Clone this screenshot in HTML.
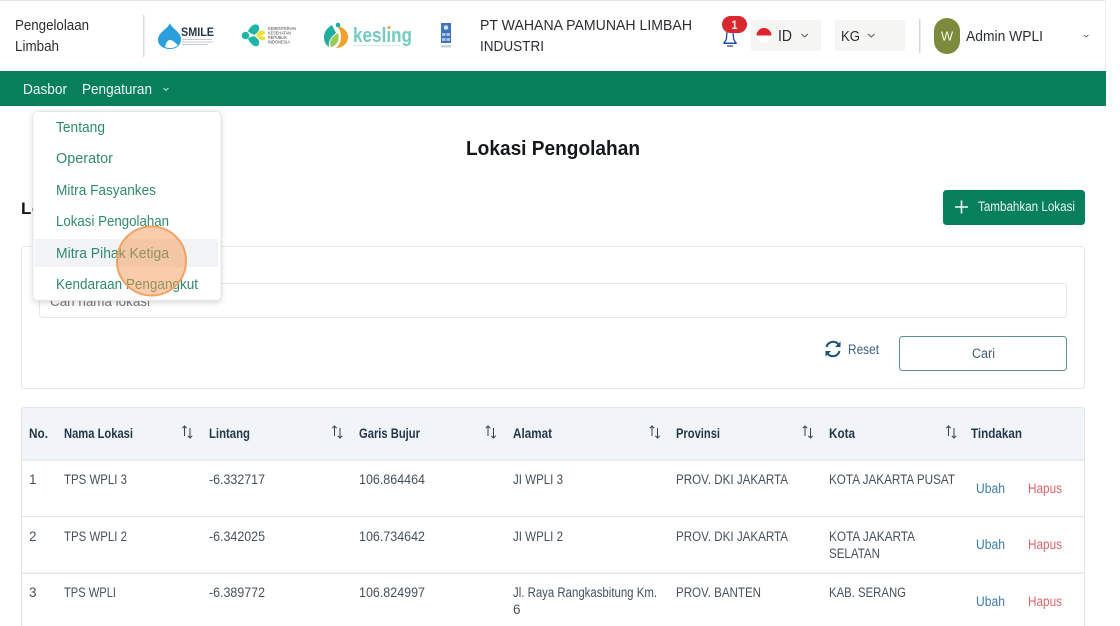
<!DOCTYPE html>
<html lang="id"><head><meta charset="utf-8"><title>Lokasi Pengolahan</title>
<style>
html,body{margin:0;padding:0;width:1120px;height:626px;overflow:hidden;background:#fff}
svg{display:block;filter:blur(.3px)}
text{font-family:"Liberation Sans",sans-serif;font-size:13px;fill:#37474f}
.h{font-size:15px;fill:#2b2f33}
.n{font-size:15px;fill:#eef7f3}
.m{font-size:15px;fill:#2f8a6d}
.th{font-size:13.5px;font-weight:bold;fill:#24384a}
.td{font-size:13.5px;fill:#45525c}
.u{font-size:13.5px;fill:#3d7cb0}
.x{font-size:13.5px;fill:#d9666c}
</style></head><body>
<svg width="1120" height="626" viewBox="0 0 1120 626" xmlns="http://www.w3.org/2000/svg">
<defs><filter id="s" x="-10%" y="-10%" width="120%" height="120%"><feDropShadow dx="0" dy="2" stdDeviation="3" flood-color="#000" flood-opacity=".14"/></filter></defs>
<rect width="1120" height="626" fill="#fff"/>
<rect x="0" y="0" width="1106" height="1" fill="#e4e4e4"/>
<rect x="1105" y="0" width="1" height="71" fill="#efefef"/>
<text class="h" x="15" y="30" textLength="74" lengthAdjust="spacingAndGlyphs">Pengelolaan</text>
<text class="h" x="15" y="51" textLength="44" lengthAdjust="spacingAndGlyphs">Limbah</text>
<rect x="143" y="15" width="1.500" height="42" fill="#dcdcdc"/>
<path d="M170 23C168 29 158 32 158 40C158 45 163 49 170 49C177 49 181 45 181 39C181 32 172 29 170 23Z" fill="#2a9fdc"/>
<path d="M165 47C166 42 168 40 170 40C173 40 175 43 178 45C175 48 170 49 165 47Z" fill="#fff"/>
<text x="181" y="36" textLength="33" lengthAdjust="spacingAndGlyphs" style="font-size:11.500px;font-weight:bold;fill:#24384a">SMILE</text>
<rect x="182" y="39" width="30" height="1" fill="#c5ccd0"/><rect x="182" y="41.500" width="31" height="1" fill="#c5ccd0"/><rect x="182" y="44" width="26" height="1" fill="#c5ccd0"/>
<path d="M248 31C252 23 258 23 259 27C260 31 257 33 254 35C251 33 249 33 248 31Z" fill="#1fb5a6"/>
<path d="M248 39C252 47 258 48 259 44C260 40 257 38 254 36C251 37 249 37 248 39Z" fill="#1fb5a6"/>
<circle cx="245.500" cy="35.500" r="3.800" fill="#1fb5a6"/>
<path d="M256 35C259 30 263 29 265 32C266 34 263 35 260 35.500C263 36 266 37 265 39C263 42 259 40 256 35Z" fill="#f2e23c"/>
<text x="268" y="30" textLength="28" lengthAdjust="spacingAndGlyphs" style="font-size:4.500px;fill:#444">KEMENTERIAN</text>
<text x="268" y="34.500" textLength="23" lengthAdjust="spacingAndGlyphs" style="font-size:4.500px;fill:#444">KESEHATAN</text>
<text x="268" y="39" textLength="19" lengthAdjust="spacingAndGlyphs" style="font-size:4.500px;fill:#444">REPUBLIK</text>
<text x="268" y="43.500" textLength="22" lengthAdjust="spacingAndGlyphs" style="font-size:4.500px;fill:#444">INDONESIA</text>
<path d="M336 25C344 27 348 32 348 37C348 44 342 48 336 48C338 46 341 43 341 37C341 32 339 28 336 25Z" fill="#f5a02d"/>
<path d="M332 25C327 28 324 32 324 37C324 42 326 45 329 47C328 41 331 37 336 33C335 30 333 28 332 25Z" fill="#1fae9e"/>
<path d="M331 47C328 41 333 36 338 33C340 39 338 45 331 47Z" fill="#9ccb55"/>
<circle cx="338" cy="25" r="2.300" fill="#1fae9e"/>
<text x="353" y="42" textLength="59" lengthAdjust="spacingAndGlyphs" style="font-size:20px;fill:#74cbc2;font-weight:bold">kesling</text>
<rect x="354" y="45" width="46" height="1" fill="#d5ebe8"/>
<circle cx="389" cy="27.500" r="1.500" fill="#f5a02d"/>
<rect x="441" y="23" width="10" height="20" fill="#3f73b8"/>
<circle cx="446" cy="27.500" r="2.300" fill="#cfe0f2"/>
<rect x="442" y="33" width="3.500" height="3" fill="#a8c4e6"/><rect x="446.500" y="33" width="3.500" height="3" fill="#a8c4e6"/><rect x="442" y="38" width="3.500" height="3" fill="#a8c4e6"/><rect x="446.500" y="38" width="3.500" height="3" fill="#a8c4e6"/>
<rect x="441" y="45" width="10" height="2.500" fill="#c8d3df"/>
<text class="h" x="480" y="30" textLength="212" lengthAdjust="spacingAndGlyphs">PT WAHANA PAMUNAH LIMBAH</text>
<text class="h" x="480" y="51" textLength="64" lengthAdjust="spacingAndGlyphs">INDUSTRI</text>
<path d="M727 31L726.500 38C726.300 40 725.200 41.500 723.800 43.200H736.200C734.800 41.500 733.700 40 733.500 38L733 31" fill="none" stroke="#2146a8" stroke-width="1.300" stroke-linejoin="round"/>
<path d="M723.800 43.200H736.200" stroke="#2146a8" stroke-width="1.300"/>
<path d="M727.500 46H732.500" stroke="#2146a8" stroke-width="1.300" stroke-linecap="round"/>
<rect x="722" y="16" width="25" height="17" rx="8.500" fill="#d8282f"/>
<text x="734.500" y="29" text-anchor="middle" style="font-size:11.500px;font-weight:bold;fill:#f6e6e6">1</text>
<rect x="751" y="20" width="70" height="31" fill="#f5f5f3"/>
<circle cx="764" cy="35.500" r="7.500" fill="#fff"/>
<path d="M756.500 35.500A7.500 7.500 0 0 1 771.500 35.500Z" fill="#e0232d"/>
<text class="h" x="778" y="41" textLength="14" lengthAdjust="spacingAndGlyphs" style="font-size:15.500px">ID</text>
<path d="M801.500 34L804.700 37L808 34" fill="none" stroke="#555" stroke-width="1"/>
<rect x="835" y="20" width="70" height="31" fill="#f5f5f3"/>
<text class="h" x="841" y="41" textLength="19" lengthAdjust="spacingAndGlyphs" style="font-size:15px">KG</text>
<path d="M868 34L871.300 37L874.500 34" fill="none" stroke="#555" stroke-width="1"/>
<rect x="919" y="19" width="1.500" height="34" fill="#d6d6d6"/>
<rect x="934" y="18" width="26" height="36" rx="13" fill="#7b8a3b"/>
<text x="947" y="40.500" text-anchor="middle" style="font-size:13px;fill:#f3f5ea">W</text>
<text class="h" x="966" y="41" textLength="77" lengthAdjust="spacingAndGlyphs">Admin WPLI</text>
<path d="M1084 35L1086.200 37L1088.400 35" fill="none" stroke="#666" stroke-width="1"/>
<rect x="0" y="71" width="1106" height="35" fill="#087f5b"/>
<text class="n" x="23" y="94" textLength="44" lengthAdjust="spacingAndGlyphs">Dasbor</text>
<text class="n" x="82" y="94" textLength="70" lengthAdjust="spacingAndGlyphs">Pengaturan</text>
<path d="M163.500 88L166 90.300L168.500 88" fill="none" stroke="#bfe0d4" stroke-width="1"/>
<text x="466" y="155" textLength="174" lengthAdjust="spacingAndGlyphs" style="font-size:20px;font-weight:bold;fill:#15181b">Lokasi Pengolahan</text>
<text x="21" y="214" style="font-size:17px;font-weight:bold;fill:#15181b">Lo</text>
<rect x="943" y="190" width="142" height="35" rx="3.500" fill="#087f5b"/>
<path d="M961.500 200.500V213.500M955 207H968" stroke="#f2f9f6" stroke-width="1.600"/>
<text x="978" y="211" textLength="97" lengthAdjust="spacingAndGlyphs" style="font-size:13.500px;fill:#e8f4ef">Tambahkan Lokasi</text>
<rect x="21.500" y="246.500" width="1063" height="142" rx="3" fill="#fff" stroke="#e6e6e6"/>
<rect x="39.500" y="283.500" width="1027" height="34" rx="3" fill="#fff" stroke="#e6e6e6"/>
<text x="50" y="306" textLength="100" lengthAdjust="spacingAndGlyphs" style="font-size:14px;fill:#777">Cari nama lokasi</text>
<g fill="none" stroke="#14527f" stroke-width="2">
<path d="M826.500 347A6.800 6.800 0 0 1 838.500 344.500"/>
<path d="M839.500 351A6.800 6.800 0 0 1 827.500 353.500"/>
</g>
<path d="M840.500 341.500V347H835Z M825.500 356.500V351H831Z" fill="#14527f"/>
<text x="848" y="354" textLength="31" lengthAdjust="spacingAndGlyphs" style="font-size:13.500px;fill:#3d5f85">Reset</text>
<rect x="899.500" y="336.500" width="167" height="34" rx="3" fill="#fff" stroke="#5f8f90"/>
<text x="972" y="358" textLength="23" lengthAdjust="spacingAndGlyphs" style="font-size:13.500px;fill:#3d5f75">Cari</text>
<rect x="21.500" y="407.500" width="1063" height="230" rx="3" fill="#fff" stroke="#e2e4e6"/>
<path d="M22 460V411Q22 408 25 408H1081Q1084 408 1084 411V460Z" fill="#f1f5f9"/>
<rect x="22" y="459.500" width="1062" height="1" fill="#d9dde1"/>
<rect x="22" y="516" width="1062" height="1" fill="#dfe1e3"/>
<rect x="22" y="572.500" width="1062" height="1.500" fill="#e4e6e8"/>
<text class="th" x="29" y="438" textLength="19" lengthAdjust="spacingAndGlyphs">No.</text>
<text class="th" x="64" y="438" textLength="69" lengthAdjust="spacingAndGlyphs">Nama Lokasi</text>
<text class="th" x="209" y="438" textLength="41" lengthAdjust="spacingAndGlyphs">Lintang</text>
<text class="th" x="359" y="438" textLength="61" lengthAdjust="spacingAndGlyphs">Garis Bujur</text>
<text class="th" x="513" y="438" textLength="39" lengthAdjust="spacingAndGlyphs">Alamat</text>
<text class="th" x="676" y="438" textLength="44" lengthAdjust="spacingAndGlyphs">Provinsi</text>
<text class="th" x="829" y="438" textLength="26" lengthAdjust="spacingAndGlyphs">Kota</text>
<text class="th" x="971" y="438" textLength="51" lengthAdjust="spacingAndGlyphs">Tindakan</text>
<g fill="none" stroke="#33424f" stroke-width="1">
<path d="M184.500 436V426M182.300 428.200L184.500 426L186.700 428.200M190 428V438M187.800 435.800L190 438L192.200 435.800"/>
<path d="M334.500 436V426M332.300 428.200L334.500 426L336.700 428.200M340 428V438M337.800 435.800L340 438L342.200 435.800"/>
<path d="M488 436V426M485.800 428.200L488 426L490.200 428.200M493.500 428V438M491.300 435.800L493.500 438L495.700 435.800"/>
<path d="M652 436V426M649.800 428.200L652 426L654.200 428.200M657.500 428V438M655.300 435.800L657.500 438L659.700 435.800"/>
<path d="M805 436V426M802.800 428.200L805 426L807.200 428.200M810.500 428V438M808.300 435.800L810.500 438L812.700 435.800"/>
<path d="M948.500 436V426M946.300 428.200L948.500 426L950.700 428.200M954 428V438M951.800 435.800L954 438L956.200 435.800"/>
</g>
<text class="td" x="29" y="484">1</text>
<text class="td" x="64" y="484" textLength="63" lengthAdjust="spacingAndGlyphs">TPS WPLI 3</text>
<text class="td" x="209" y="484" textLength="56" lengthAdjust="spacingAndGlyphs">-6.332717</text>
<text class="td" x="359" y="484" textLength="66" lengthAdjust="spacingAndGlyphs">106.864464</text>
<text class="td" x="513" y="484" textLength="50" lengthAdjust="spacingAndGlyphs">JI WPLI 3</text>
<text class="td" x="676" y="484" textLength="112" lengthAdjust="spacingAndGlyphs">PROV. DKI JAKARTA</text>
<text class="td" x="829" y="484" textLength="126" lengthAdjust="spacingAndGlyphs">KOTA JAKARTA PUSAT</text>
<text class="u" x="976" y="493" textLength="29" lengthAdjust="spacingAndGlyphs">Ubah</text>
<text class="x" x="1028" y="493" textLength="34" lengthAdjust="spacingAndGlyphs">Hapus</text>
<text class="td" x="29" y="541">2</text>
<text class="td" x="64" y="541" textLength="63" lengthAdjust="spacingAndGlyphs">TPS WPLI 2</text>
<text class="td" x="209" y="541" textLength="56" lengthAdjust="spacingAndGlyphs">-6.342025</text>
<text class="td" x="359" y="541" textLength="66" lengthAdjust="spacingAndGlyphs">106.734642</text>
<text class="td" x="513" y="541" textLength="50" lengthAdjust="spacingAndGlyphs">JI WPLI 2</text>
<text class="td" x="676" y="541" textLength="112" lengthAdjust="spacingAndGlyphs">PROV. DKI JAKARTA</text>
<text class="td" x="829" y="541" textLength="86" lengthAdjust="spacingAndGlyphs">KOTA JAKARTA</text>
<text class="td" x="829" y="558" textLength="51" lengthAdjust="spacingAndGlyphs">SELATAN</text>
<text class="u" x="976" y="549" textLength="29" lengthAdjust="spacingAndGlyphs">Ubah</text>
<text class="x" x="1028" y="549" textLength="34" lengthAdjust="spacingAndGlyphs">Hapus</text>
<text class="td" x="29" y="597">3</text>
<text class="td" x="64" y="597" textLength="52" lengthAdjust="spacingAndGlyphs">TPS WPLI</text>
<text class="td" x="209" y="597" textLength="56" lengthAdjust="spacingAndGlyphs">-6.389772</text>
<text class="td" x="359" y="597" textLength="66" lengthAdjust="spacingAndGlyphs">106.824997</text>
<text class="td" x="513" y="597" textLength="144" lengthAdjust="spacingAndGlyphs">Jl. Raya Rangkasbitung Km.</text>
<text class="td" x="513" y="614">6</text>
<text class="td" x="676" y="597" textLength="85" lengthAdjust="spacingAndGlyphs">PROV. BANTEN</text>
<text class="td" x="829" y="597" textLength="77" lengthAdjust="spacingAndGlyphs">KAB. SERANG</text>
<text class="u" x="976" y="606" textLength="29" lengthAdjust="spacingAndGlyphs">Ubah</text>
<text class="x" x="1028" y="606" textLength="34" lengthAdjust="spacingAndGlyphs">Hapus</text>
<rect x="33" y="111.500" width="188" height="189" rx="4" fill="#fff" stroke="#e4e6e8" filter="url(#s)"/>
<rect x="35" y="239" width="183" height="28" fill="#f1f3f5"/>
<text class="m" x="56" y="132" textLength="49" lengthAdjust="spacingAndGlyphs">Tentang</text>
<text class="m" x="56" y="163" textLength="57" lengthAdjust="spacingAndGlyphs">Operator</text>
<text class="m" x="56" y="195" textLength="100" lengthAdjust="spacingAndGlyphs">Mitra Fasyankes</text>
<text class="m" x="56" y="226" textLength="113" lengthAdjust="spacingAndGlyphs">Lokasi Pengolahan</text>
<text class="m" x="56" y="258" textLength="113" lengthAdjust="spacingAndGlyphs">Mitra Pihak Ketiga</text>
<text class="m" x="56" y="289" textLength="142" lengthAdjust="spacingAndGlyphs">Kendaraan Pengangkut</text>
<circle cx="151.500" cy="261" r="34.500" fill="#f59a55" fill-opacity=".5" stroke="#f3a263" stroke-width="2"/>
</svg>
</body></html>
